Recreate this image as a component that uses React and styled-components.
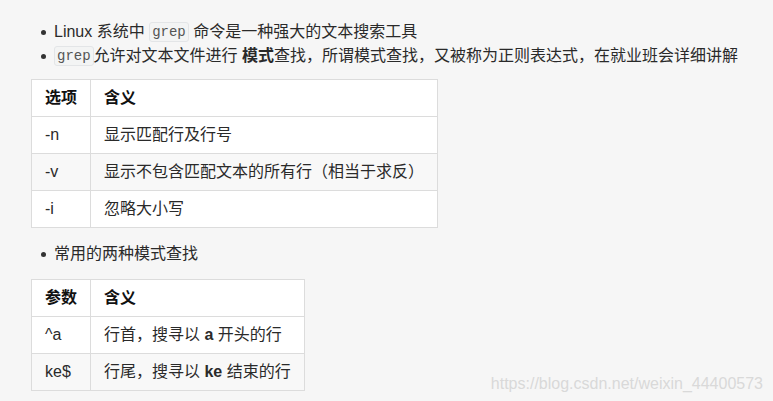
import * as React from "react";
import styled, { createGlobalStyle } from "styled-components";

const GlobalStyle = createGlobalStyle`
  html, body {
    margin: 0;
    padding: 0;
    background: #f6f6f6;
  }
  body {
    font-family: "Liberation Sans", Arial, "Noto Sans CJK SC", sans-serif;
    color: #2a2a2a;
    font-size: 16px;
  }
`;

const Page = styled.div`
  position: relative;
  width: 773px;
  height: 401px;
  overflow: hidden;
  padding: 20px 0 0 31px;
  box-sizing: border-box;
`;

const List = styled.ul`
  list-style: none;
  margin: ${(p) => p.$top || 0}px 0 0;
  padding: 0;
`;

const Item = styled.li`
  display: flex;
  align-items: center;
  height: 24px;
  line-height: 24px;
  white-space: nowrap;

  &:before {
    content: "";
    width: 5px;
    height: 5px;
    border-radius: 50%;
    background: #333;
    margin: 0 8px 0 10px;
    flex-shrink: 0;
  }
`;

const Code = styled.code`
  display: inline-block;
  font-family: "Liberation Mono", "DejaVu Sans Mono", monospace;
  font-size: 14px;
  line-height: 18px;
  color: #555;
  background: #f3f4f4;
  border: 1px solid #e3e5e7;
  border-radius: 3px;
  padding: 0 2px;
  vertical-align: 1px;
`;

const Table = styled.table`
  border-collapse: collapse;
  margin-top: ${(p) => p.$top}px;
  background: #fff;

  th,
  td {
    border: 1px solid #dcdcdc;
    height: 36px;
    padding: 0 13px;
    text-align: left;
    white-space: nowrap;
    line-height: 20px;
  }

  th {
    font-weight: bold;
    color: #111;
  }

  tbody tr:nth-child(even) {
    background: #f8f8f8;
  }
`;

const Watermark = styled.div`
  position: absolute;
  right: 10px;
  bottom: 8px;
  font-family: "Liberation Sans", Arial, sans-serif;
  font-size: 16px;
  color: #d9d9d9;
`;

const OPTIONS = [
  ["-n", "显示匹配行及行号"],
  ["-v", "显示不包含匹配文本的所有行（相当于求反）"],
  ["-i", "忽略大小写"],
];

const PATTERNS = [
  ["^a", <>行首，搜寻以 <b>a</b> 开头的行</>],
  ["ke$", <>行尾，搜寻以 <b>ke</b> 结束的行</>],
];

const renderTable = (head, rows, top) => (
  <Table $top={top}>
    <thead>
      <tr>
        <th>{head}</th>
        <th>含义</th>
      </tr>
    </thead>
    <tbody>
      {rows.map(([key, desc]) => (
        <tr key={key}>
          <td>{key}</td>
          <td>{desc}</td>
        </tr>
      ))}
    </tbody>
  </Table>
);

const App = () => (
  <>
    <GlobalStyle />
    <Page>
      <List>
        <Item>
          <span>
            Linux 系统中 <Code>grep</Code> 命令是一种强大的文本搜索工具
          </span>
        </Item>
        <Item>
          <span>
            <Code>grep</Code>允许对文本文件进行 <b>模式</b>查找，所谓模式查找，又被称为正则表达式，在就业班会详细讲解
          </span>
        </Item>
      </List>
      {renderTable("选项", OPTIONS, 11)}
      <List $top={14}>
        <Item>
          <span>常用的两种模式查找</span>
        </Item>
      </List>
      {renderTable("参数", PATTERNS, 13)}
      <Watermark>https://blog.csdn.net/weixin_44400573</Watermark>
    </Page>
  </>
);

export default App;
